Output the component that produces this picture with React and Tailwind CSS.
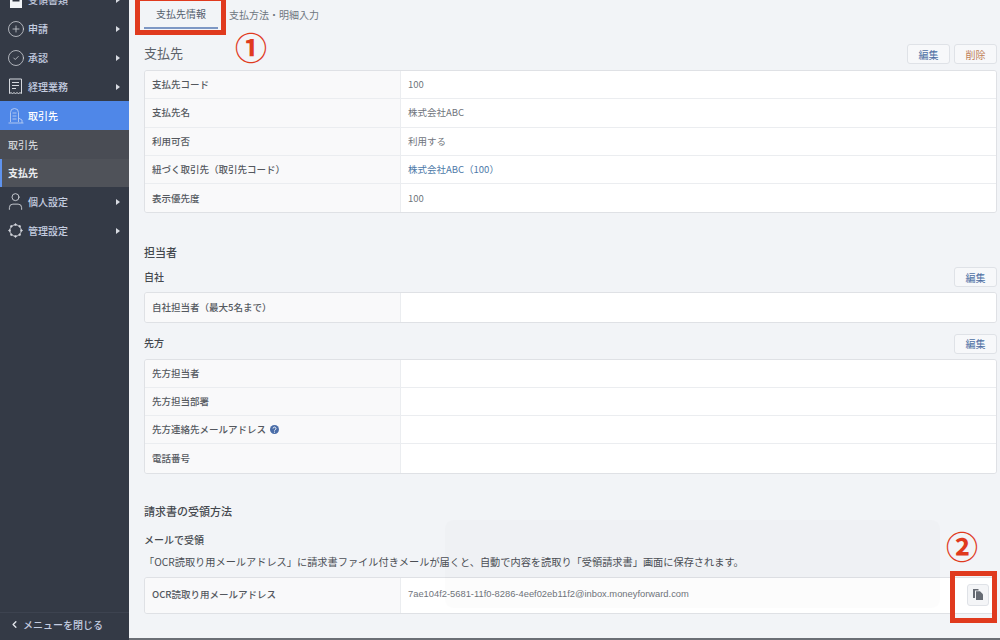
import React from 'react';
import { CirclePlus, CircleCheck, User, ChevronLeft } from 'lucide-react';

const fontStack = { fontFamily: '"Noto Sans CJK JP", "Noto Sans", sans-serif' };

const LedgerIcon = () => (
  <svg width="15" height="17" viewBox="0 0 15 17" fill="none" stroke="currentColor" strokeWidth="1">
    <path d="M1.5 1h12v14.5l-1.5-.8-1.5.8-1.5-.8-1.5.8-1.5-.8-1.5.8-1.5-.8-1.5.8z" />
    <path d="M4 4.5h7M4 7.5h7M4 10.5h4" />
  </svg>
);

const BookIcon = () => (
  <svg width="14" height="16" viewBox="0 0 14 16" fill="#2f3440">
    <path d="M1 0h12v16H1z" fill="#f2f4f7" />
    <path d="M3.5 4h7v1.5h-7zM3.5 8h7v1.5h-7z" />
  </svg>
);

const PartnerIcon = () => (
  <svg width="18" height="18" viewBox="0 0 18 18" fill="none" stroke="currentColor" strokeWidth="0.9">
    <path d="M3.5 15V5.5a4 4 0 0 1 8 0V15" />
    <path d="M5.5 6h4M5.5 9h4M5.5 12h4" />
    <path d="M1.5 16h15M11.5 11l3.5 2v3" />
  </svg>
);

const GearIcon = () => (
  <svg width="15" height="15" viewBox="0 0 16 16" fill="none" stroke="currentColor" strokeWidth="1">
    <circle cx="8" cy="8" r="6" />
    <circle cx="8" cy="1.6" r="0.8" fill="currentColor" />
    <circle cx="8" cy="14.4" r="0.8" fill="currentColor" />
    <circle cx="1.6" cy="8" r="0.8" fill="currentColor" />
    <circle cx="14.4" cy="8" r="0.8" fill="currentColor" />
    <circle cx="3.5" cy="3.5" r="0.8" fill="currentColor" />
    <circle cx="12.5" cy="3.5" r="0.8" fill="currentColor" />
    <circle cx="3.5" cy="12.5" r="0.8" fill="currentColor" />
    <circle cx="12.5" cy="12.5" r="0.8" fill="currentColor" />
  </svg>
);

const CopyIcon = () => (
  <svg width="10" height="11" viewBox="0 0 10 11" fill="#666b73">
    <path d="M0 0h5.5v1.5H2V9H0z" />
    <path d="M3 2.2h4l3 3V11H3z" />
  </svg>
);

const HelpIcon = () => (
  <svg width="9" height="9" viewBox="0 0 10 10">
    <circle cx="5" cy="5" r="5" fill="#4a6da8" />
    <path d="M3.4 3.9a1.6 1.6 0 1 1 2.4 1.4c-.5.3-.8.5-.8 1" fill="none" stroke="#fff" strokeWidth="1.1" />
    <circle cx="5" cy="7.8" r="0.7" fill="#fff" />
  </svg>
);

const navItems = [
  { label: '受領書類', icon: <BookIcon /> },
  { label: '申請', icon: <CirclePlus size={18} strokeWidth={1} /> },
  { label: '承認', icon: <CircleCheck size={18} strokeWidth={1} /> },
  { label: '経理業務', icon: <LedgerIcon /> },
];

const NavRow = ({ icon, label, active, arrow = true }) => (
  <div className={`flex h-[29px] items-center pl-[3px] pr-[9px] ${active ? 'bg-[#4f87e8] text-white' : 'text-[#c5cde0]'}`}>
    <span className={`flex w-[25px] justify-center ${active ? 'text-[#b9cdf2]' : 'text-[#d5d8de]'}`}>{icon}</span>
    <span className="flex-1 text-[10px] font-medium">{label}</span>
    {arrow && <span className="h-0 w-0 border-y-[3.5px] border-l-[4px] border-y-transparent border-l-[#d8dbe2]" />}
  </div>
);

const Sidebar = () => (
  <aside className="flex h-[640px] w-[129px] shrink-0 flex-col overflow-hidden bg-[#343a46]">
    <div className="-mt-[15px] flex-1">
      {navItems.map((item) => (
        <NavRow key={item.label} {...item} />
      ))}
      <NavRow icon={<PartnerIcon />} label="取引先" active arrow={false} />
      <div className="flex h-[28.5px] items-center bg-[#494c54] pl-[8px] text-[10px] font-medium text-[#d2d4d8]">取引先</div>
      <div className="flex h-[28.5px] items-center border-l-2 border-[#5f93ee] bg-[#4f5259] pl-[6px] text-[10px] font-bold text-[#eceef1]">支払先</div>
      <NavRow icon={<User size={21} strokeWidth={1} />} label="個人設定" />
      <NavRow icon={<GearIcon />} label="管理設定" />
    </div>
    <div className="flex h-[28px] items-center border-t border-[#3d4350] pl-[9px] pb-[4px] text-[10px] font-medium text-[#c5cde0]">
      <ChevronLeft size={11} strokeWidth={3} className="text-[#e2e5ea]" />
      <span className="ml-[3px]">メニューを閉じる</span>
    </div>
  </aside>
);

const ActionButton = ({ label, danger }) => (
  <button className={`flex h-[20px] w-[43px] items-center justify-center rounded-[3px] border border-[#dfe2e7] bg-[#f7f8fa] text-[10px] ${danger ? 'text-[#bf7f58]' : 'text-[#4d6fa3]'}`}>
    {label}
  </button>
);

const InfoRow = ({ label, value, link, help, mail, last, tall }) => (
  <div className={`flex ${tall ? 'h-[35px]' : 'h-[28.25px]'} ${last ? '' : 'border-b border-[#ebedf0]'}`}>
    <div className="flex w-[256px] shrink-0 items-center gap-[4px] border-r border-[#ebedf0] bg-[#f9f9fa] pb-[1px] pl-[7px] text-[9.5px] font-medium text-[#54585e]">
      {label}
      {help && <HelpIcon />}
    </div>
    <div className={`flex flex-1 items-center bg-white pb-[1px] pl-[7px] ${mail ? "font-['Liberation_Sans'] text-[9.35px]" : 'text-[9.5px]'} ${link ? 'text-[#4d7aa8]' : 'text-[#70757c]'}`}>{value}</div>
  </div>
);

const InfoTable = ({ rows }) => (
  <div className="overflow-hidden rounded-[3px] border border-[#dfe1e5]">
    {rows.map((row, i) => (
      <InfoRow key={row.label} {...row} last={i === rows.length - 1} />
    ))}
  </div>
);

const SubHead = ({ label }) => (
  <div className="mt-[11px] mb-[5px] flex h-[20px] items-center justify-between">
    <span className="pb-[2px] text-[10px] font-medium text-[#44484e]">{label}</span>
    <ActionButton label="編集" />
  </div>
);

const supplierRows = [
  { label: '支払先コード', value: '100' },
  { label: '支払先名', value: '株式会社ABC' },
  { label: '利用可否', value: '利用する' },
  { label: '紐づく取引先（取引先コード）', value: '株式会社ABC（100）', link: true },
  { label: '表示優先度', value: '100' },
];

const partnerRows = [
  { label: '先方担当者' },
  { label: '先方担当部署' },
  { label: '先方連絡先メールアドレス', help: true },
  { label: '電話番号' },
];

export default function App() {
  return (
    <div className="relative flex h-[640px] w-[1000px] overflow-hidden bg-[#f2f4f7]" style={fontStack}>
      <Sidebar />
      <main className="flex-1 border-b-2 border-[#6b6f75] pl-[15px] pr-[3px]">
        <nav className="flex h-[29px] items-end text-[10px]">
          <div className="flex h-[29px] w-[74px] items-center justify-center border-b-2 border-[#7d97c4] pb-[1px] text-[#55606e]">支払先情報</div>
          <div className="flex h-[29px] items-center pb-[1px] pl-[11px] text-[#6e7680]">支払方法・明細入力</div>
        </nav>

        <section className="mt-[15px] flex h-[20px] items-center justify-between">
          <h2 className="pb-[3px] text-[13px] text-[#5c6269]">支払先</h2>
          <div className="flex gap-[4px]">
            <ActionButton label="編集" />
            <ActionButton label="削除" danger />
          </div>
        </section>
        <div className="mt-[6px]">
          <InfoTable rows={supplierRows} />
        </div>

        <h2 className="mt-[30px] h-[18px] text-[11px] font-medium leading-[18px] text-[#44484e]">担当者</h2>
        <div className="-mt-[5px]">
          <SubHead label="自社" />
          <InfoTable rows={[{ label: '自社担当者（最大5名まで）' }]} />
          <SubHead label="先方" />
          <InfoTable rows={partnerRows} />
        </div>

        <h2 className="mt-[28px] h-[18px] text-[11px] font-medium leading-[18px] text-[#44484e]">請求書の受領方法</h2>
        <div className="mt-[11px] h-[18px] text-[10px] font-medium leading-[18px] text-[#44484e]">メールで受領</div>
        <p className="mt-[4px] h-[18px] text-[10.2px] leading-[18px] text-[#4b4f55]">「OCR読取り用メールアドレス」に請求書ファイル付きメールが届くと、自動で内容を読取り「受領請求書」画面に保存されます。</p>
        <div className="relative mt-[6px]">
          <InfoTable rows={[{ label: 'OCR読取り用メールアドレス', value: '7ae104f2-5681-11f0-8286-4eef02eb11f2@inbox.moneyforward.com', tall: true, mail: true }]} />
          <button className="absolute right-[8px] top-[7px] flex h-[22px] w-[22px] items-center justify-center rounded-[3px] border border-[#dfe2e7] bg-[#f4f5f7]">
            <CopyIcon />
          </button>
        </div>
      </main>

      {/* annotations laid over the screenshot */}
      <div className="absolute left-[135px] -top-[4px] h-[39px] w-[91px] border-[5px] border-[#e03a1e]" />
      <div className="absolute left-[235px] top-[30px] flex h-[32px] w-[32px] items-center justify-center text-[32px] font-bold leading-none text-[#e03a1e]">①</div>
      <div className="absolute left-[950px] top-[571px] h-[52px] w-[47px] border-[5px] border-[#e03a1e]" />
      <div className="absolute left-[946px] top-[529px] flex h-[32px] w-[32px] items-center justify-center text-[32px] font-bold leading-none text-[#e03a1e]">②</div>
      <div className="pointer-events-none absolute left-[445px] top-[520px] h-[88px] w-[495px] rounded-[8px] bg-black/[0.012]" />
    </div>
  );
}
